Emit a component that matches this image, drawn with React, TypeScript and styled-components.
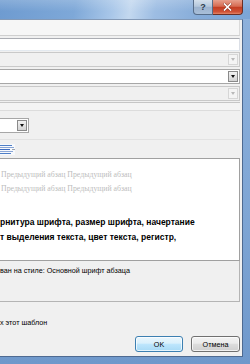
import styled, { createGlobalStyle } from 'styled-components';

const GlobalStyle = createGlobalStyle`
  html, body {
    margin: 0;
    padding: 0;
    width: 250px;
    height: 364px;
    overflow: hidden;
  }
  body {
    font-family: "Liberation Sans", "DejaVu Sans", sans-serif;
    font-size: 7.2px;
    color: #000;
  }
`;

const Window = styled.div`
  width: 250px;
  height: 364px;
  display: flex;
  flex-direction: column;
  background: linear-gradient(180deg, #8fb2dc 0%, #7ea5d4 60%, #6f98cb 100%);
`;

const TitleBar = styled.div`
  height: 19px;
  flex: none;
  display: flex;
  justify-content: flex-end;
  align-items: flex-start;
  padding-right: 7px;
  background:
    linear-gradient(180deg, rgba(255, 255, 255, 0.18) 0%, rgba(255, 255, 255, 0) 60%),
    linear-gradient(100deg, #6e9bd0 0%, #7ea8d8 30%, #a9c7e9 45%, #c3d8ef 52%, #9dbde3 62%, #86acd9 80%, #7ba5d6 100%);
`;

const CaptionButton = styled.div<{ $kind: 'help' | 'close' }>`
  height: 15px;
  box-sizing: border-box;
  width: ${({ $kind }) => ($kind === 'close' ? '30px' : '20px')};
  display: flex;
  align-items: center;
  justify-content: center;
  border: 1px solid ${({ $kind }) => ($kind === 'close' ? '#6b2f25' : '#566c88')};
  border-top: none;
  border-left: ${({ $kind }) => ($kind === 'close' ? 'none' : '1px solid #566c88')};
  border-radius: ${({ $kind }) => ($kind === 'close' ? '0 0 4px 0' : '0 0 0 4px')};
  background: ${({ $kind }) =>
    $kind === 'close'
      ? 'linear-gradient(180deg, #e7a08d 0%, #d66b52 45%, #c33d22 52%, #cf5236 85%, #e48668 100%)'
      : 'linear-gradient(180deg, #d3dfec 0%, #b4c7dc 45%, #9cb3cf 52%, #a9bfd9 100%)'};
  color: #2b3a4d;
  font-family: "Liberation Sans", sans-serif;
  font-weight: bold;
  font-size: 9px;
  line-height: 1;
`;

const Body = styled.div`
  flex: 1;
  display: flex;
  padding: 0 7px 7px 0;
  min-height: 0;
`;

const Client = styled.div`
  flex: 1;
  display: flex;
  flex-direction: column;
  background: #f0f0f0;
  border-top: 1px solid #8399b6;
  border-right: 1px solid #4e6a91;
  border-bottom: 1px solid #4e6a91;
  padding-right: 2px;
  min-width: 0;
`;

const TopBand = styled.div`
  height: 15px;
  flex: none;
  background: #f6f6f6;
  border-right: 1px solid #dadada;
  border-bottom: 1px solid #cfcfcf;
`;

const TextInput = styled.div`
  height: 13px;
  box-sizing: border-box;
  flex: none;
  margin-top: 2px;
  background: #fff;
  border: 1px solid #abadb3;
  border-left: none;
  border-bottom-color: #e3e9ef;
  border-right-color: #dbdfe6;
`;

const Combo = styled.div<{ $disabled?: boolean; $width?: number }>`
  height: 15px;
  box-sizing: border-box;
  flex: none;
  width: ${({ $width }) => ($width ? `${$width}px` : 'auto')};
  display: flex;
  justify-content: flex-end;
  align-items: center;
  padding-right: 1px;
  background: ${({ $disabled }) => ($disabled ? '#f0f0f0' : '#fff')};
  border: 1px solid ${({ $disabled }) => ($disabled ? '#c9c9c9' : '#a7a7a7')};
  border-left: none;
`;

const ComboArrow = styled.div<{ $disabled?: boolean }>`
  width: 10px;
  height: 11px;
  box-sizing: border-box;
  display: flex;
  align-items: center;
  justify-content: center;
  border: 1px solid ${({ $disabled }) => ($disabled ? '#d6d6d6' : '#8a8a8a')};
  background: ${({ $disabled }) =>
    $disabled ? '#f4f4f4' : 'linear-gradient(180deg, #f2f2f2 0%, #e3e3e3 50%, #d4d4d4 100%)'};

  &::after {
    content: '';
    border-left: 2.5px solid transparent;
    border-right: 2.5px solid transparent;
    border-top: 3px solid ${({ $disabled }) => ($disabled ? '#b9b9b9' : '#111')};
  }
`;

const ComboStack = styled.div`
  display: flex;
  flex-direction: column;
  gap: 2px;
  margin-top: 1px;
`;

const GroupHeader = styled.div`
  height: 7px;
  flex: none;
  margin-top: 1px;
  background: #f4f4f4;
  border-top: 1px solid #c6c6c6;
  border-bottom: 1px solid #dcdcdc;
`;

const ToolRow = styled.div<{ $height: number }>`
  height: ${({ $height }) => $height}px;
  flex: none;
  display: flex;
  align-items: center;
`;

const ToolDivider = styled.div`
  height: 1px;
  flex: none;
  background: #e2e2e2;
`;

const Preview = styled.div`
  height: 103px;
  box-sizing: border-box;
  flex: none;
  background: #fff;
  border: 1px solid #a0a0a0;
  border-left: none;
  padding-top: 9px;
  overflow: hidden;
  white-space: nowrap;
`;

const PrevParagraph = styled.div`
  font-family: "Liberation Serif", "DejaVu Serif", serif;
  font-size: 7.8px;
  line-height: 13.5px;
  color: #bdbdbd;
  padding-left: 1px;
`;

const SampleParagraph = styled.div`
  margin-top: 20px;
  font-family: "Liberation Sans", "DejaVu Sans", sans-serif;
  font-weight: bold;
  font-size: 8.5px;
  line-height: 15px;
  color: #000;
`;

const Description = styled.div`
  height: 41px;
  box-sizing: border-box;
  flex: none;
  border-right: 1px solid #b4b4b4;
  border-bottom: 1px solid #b4b4b4;
  padding-top: 5px;
  line-height: 9px;
  white-space: nowrap;
`;

const OptionLine = styled.div`
  margin-top: 15px;
  height: 12px;
  line-height: 12px;
  white-space: nowrap;
`;

const ButtonRow = styled.div`
  margin-top: 7px;
  display: flex;
  justify-content: flex-end;
  gap: 8px;
`;

const PushButton = styled.div<{ $default?: boolean; $width: number }>`
  width: ${({ $width }) => $width}px;
  height: 16px;
  box-sizing: border-box;
  display: flex;
  align-items: center;
  justify-content: center;
  border-radius: 3px;
  border: 1px solid ${({ $default }) => ($default ? '#3c7fb1' : '#707070')};
  background: ${({ $default }) =>
    $default
      ? 'linear-gradient(180deg, #eaf6fd 0%, #d9f0fc 45%, #bee6fd 50%, #a7d9f5 100%)'
      : 'linear-gradient(180deg, #f2f2f2 0%, #ebebeb 45%, #dddddd 50%, #cfcfcf 100%)'};
  box-shadow: inset 0 0 0 1px rgba(255, 255, 255, 0.7);
  font-size: 7.2px;
`;

function SpacingIcon() {
  return (
    <svg width="15" height="11" viewBox="0 0 15 11">
      <rect x="0" y="0" width="15" height="11" fill="#f7f9fc" />
      <rect x="0" y="1" width="12" height="1" fill="#4f7fc7" />
      <rect x="0" y="3" width="14" height="1" fill="#8aa6d6" />
      <rect x="0" y="5" width="10" height="1" fill="#3d6cc0" />
      <rect x="0" y="7" width="13" height="1" fill="#8aa6d6" />
      <rect x="0" y="9" width="11" height="1" fill="#4f7fc7" />
      <rect x="12" y="5" width="3" height="1" fill="#9aa3ad" />
    </svg>
  );
}

function CloseGlyph() {
  return (
    <svg width="9" height="8" viewBox="0 0 9 8">
      <path d="M1.5 1 L7.5 7 M7.5 1 L1.5 7" stroke="#5a1e14" strokeWidth="2.6" strokeLinecap="square" opacity="0.55" />
      <path d="M1.5 1 L7.5 7 M7.5 1 L1.5 7" stroke="#ffffff" strokeWidth="1.6" strokeLinecap="square" />
    </svg>
  );
}

export default function App() {
  return (
    <>
      <GlobalStyle />
      <Window>
        <TitleBar>
          <CaptionButton $kind="help">?</CaptionButton>
          <CaptionButton $kind="close">
            <CloseGlyph />
          </CaptionButton>
        </TitleBar>
        <Body>
          <Client>
            <TopBand />
            <TextInput />
            <ComboStack>
              <Combo $disabled>
                <ComboArrow $disabled />
              </Combo>
              <Combo>
                <ComboArrow />
              </Combo>
              <Combo $disabled>
                <ComboArrow $disabled />
              </Combo>
            </ComboStack>
            <GroupHeader />
            <ToolRow $height={28}>
              <Combo $width={29}>
                <ComboArrow />
              </Combo>
            </ToolRow>
            <ToolDivider />
            <ToolRow $height={18}>
              <SpacingIcon />
            </ToolRow>
            <Preview>
              <PrevParagraph>Предыдущий абзац Предыдущий абзац</PrevParagraph>
              <PrevParagraph>Предыдущий абзац Предыдущий абзац</PrevParagraph>
              <SampleParagraph>
                рнитура шрифта, размер шрифта, начертание
                <br />т выделения текста, цвет текста, регистр,
              </SampleParagraph>
            </Preview>
            <Description>ван на стиле: Основной шрифт абзаца</Description>
            <OptionLine>х этот шаблон</OptionLine>
            <ButtonRow>
              <PushButton $default $width={48}>OK</PushButton>
              <PushButton $width={49}>Отмена</PushButton>
            </ButtonRow>
          </Client>
        </Body>
      </Window>
    </>
  );
}
